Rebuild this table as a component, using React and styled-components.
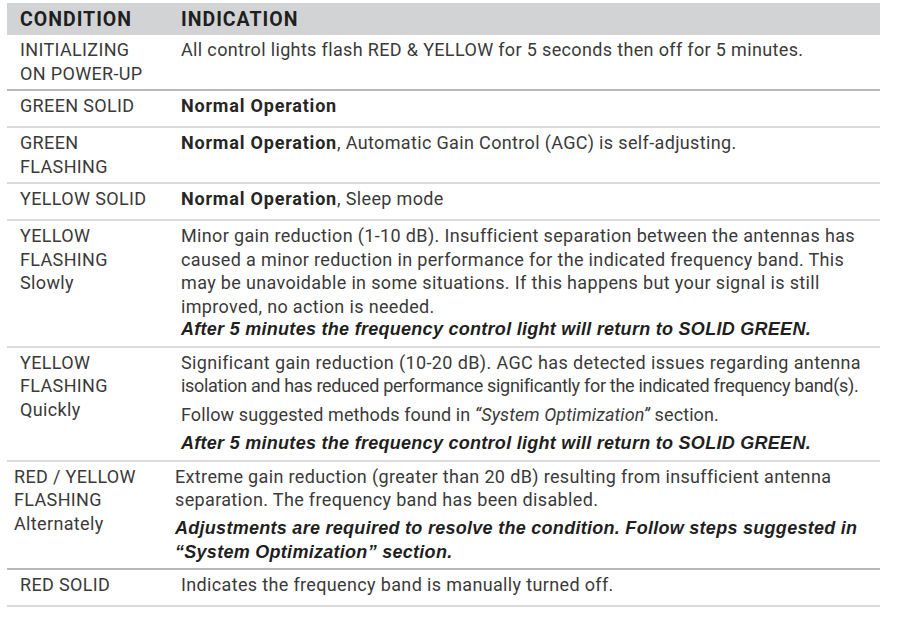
import React from 'react';
import styled, { createGlobalStyle } from 'styled-components';

const GlobalStyle = createGlobalStyle`
  body {
    margin: 0;
    background: #ffffff;
    font-family: Roboto, 'Liberation Sans', sans-serif;
  }
`;

const rows = [
  {
    condition: ['INITIALIZING', 'ON POWER-UP'],
    border: 'strong',
    indication: [
      { text: 'All control lights flash RED & YELLOW for 5 seconds then off for 5 minutes.' },
    ],
  },
  {
    condition: ['GREEN SOLID'],
    indication: [{ lead: 'Normal Operation' }],
  },
  {
    condition: ['GREEN', 'FLASHING'],
    indication: [
      { lead: 'Normal Operation', text: ', Automatic Gain Control (AGC) is self-adjusting.' },
    ],
  },
  {
    condition: ['YELLOW SOLID'],
    indication: [{ lead: 'Normal Operation', text: ', Sleep mode' }],
  },
  {
    condition: ['YELLOW', 'FLASHING', 'Slowly'],
    indication: [
      {
        text:
          'Minor gain reduction (1-10 dB). Insufficient separation between the antennas has caused a minor reduction in performance for the indicated frequency band. This may be unavoidable in some situations. If this happens but your signal is still improved, no action is needed.',
      },
      { note: 'After 5 minutes the frequency control light will return to SOLID GREEN.', tight: true },
    ],
  },
  {
    condition: ['YELLOW', 'FLASHING', 'Quickly'],
    indication: [
      {
        justified: 'Significant gain reduction (10-20 dB). AGC has detected issues regarding antenna',
        squeezed: 'isolation and has reduced performance significantly for the indicated frequency band(s).',
      },
      {
        text: 'Follow suggested methods found in ',
        ref: '“System Optimization”',
        tail: ' section.',
        condensed: true,
      },
      { note: 'After 5 minutes the frequency control light will return to SOLID GREEN.' },
    ],
  },
  {
    condition: ['RED / YELLOW', 'FLASHING', 'Alternately'],
    shifted: true,
    border: 'strong',
    indication: [
      {
        text:
          'Extreme gain reduction (greater than 20 dB) resulting from insufficient antenna separation. The frequency band has been disabled.',
      },
      {
        note:
          'Adjustments are required to resolve the condition. Follow steps suggested in “System Optimization” section.',
      },
    ],
  },
  {
    condition: ['RED SOLID'],
    indication: [{ text: 'Indicates the frequency band is manually turned off.' }],
  },
];

function Paragraph({ item }) {
  if (item.justified) {
    return (
      <Para>
        <JustifiedLine>{item.justified}</JustifiedLine>
        <SqueezedLine>{item.squeezed}</SqueezedLine>
      </Para>
    );
  }
  if (item.note) {
    return <Note $tight={item.tight}>{item.note}</Note>;
  }
  return (
    <Para $condensed={item.condensed}>
      {item.lead && <Lead>{item.lead}</Lead>}
      {item.text}
      {item.ref && <Ref>{item.ref}</Ref>}
      {item.tail}
    </Para>
  );
}

export default function App() {
  return (
    <Page>
      <GlobalStyle />
      <Table>
        <HeaderRow>
          <HeaderCell>CONDITION</HeaderCell>
          <HeaderCell>INDICATION</HeaderCell>
        </HeaderRow>
        {rows.map((row, i) => (
          <Row key={i} $border={row.border} $shifted={row.shifted}>
            <Condition>
              {row.condition.map(line => (
                <div key={line}>{line}</div>
              ))}
            </Condition>
            <Indication>
              {row.indication.map((item, j) => (
                <Paragraph key={j} item={item} />
              ))}
            </Indication>
          </Row>
        ))}
      </Table>
    </Page>
  );
}

const Page = styled.div`
  padding: 3px 0 0 7px;
`;

const Table = styled.div`
  width: 873px;
  display: flex;
  flex-direction: column;
`;

const HeaderRow = styled.div`
  display: grid;
  grid-template-columns: 174px 1fr;
  height: 32px;
  align-items: center;
  background: #d2d3d4;
`;

const HeaderCell = styled.div`
  padding-left: 13px;
  padding-top: 1px;
  font-weight: 700;
  font-size: 19.5px;
  letter-spacing: 1px;
  color: #1f1f1f;
  &:last-child {
    padding-left: 0;
  }
`;

const Row = styled.div`
  display: grid;
  grid-template-columns: 161px 1fr;
  padding: 3px 0 4px ${p => (p.$shifted ? '7px' : '13px')};
  min-height: 37px;
  box-sizing: border-box;
  border-bottom: 2px solid ${p => (p.$border === 'strong' ? '#b9b9b9' : '#dadada')};
  font-size: 18px;
  line-height: 23.5px;
  letter-spacing: 0.35px;
  color: #3a3a3a;
`;

const Condition = styled.div`
  font-weight: 400;
`;

const Indication = styled.div`
  width: 688px;
  display: flex;
  flex-direction: column;
  gap: 5.5px;
`;

const Para = styled.div`
  letter-spacing: ${p => (p.$condensed ? '0.1px' : 'inherit')};
`;

const Lead = styled.span`
  font-weight: 700;
  letter-spacing: 0.8px;
  color: #262626;
`;

const Ref = styled.span`
  font-style: italic;
`;

const JustifiedLine = styled.div`
  width: 680px;
  text-align: justify;
  text-align-last: justify;
`;

const SqueezedLine = styled.div`
  white-space: nowrap;
  letter-spacing: -0.3px;
`;

const Note = styled.div`
  font-family: 'Liberation Sans', Arial, sans-serif;
  font-weight: 700;
  font-style: italic;
  letter-spacing: 0.28px;
  color: #1f1f1f;
  margin-top: ${p => (p.$tight ? '-5.5px' : '0')};
`;
